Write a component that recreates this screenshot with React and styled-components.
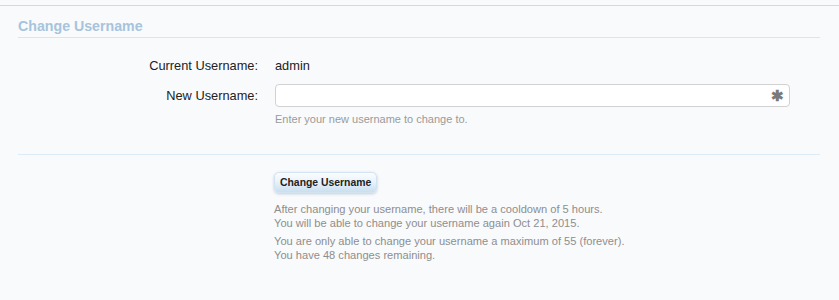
import React from "react";
import styled, { createGlobalStyle } from "styled-components";

const Global = createGlobalStyle`
  html, body { margin: 0; padding: 0; background: #f9fafc; }
  body { font-family: "Liberation Sans", Arial, sans-serif; }
`;

const Page = styled.div`
  margin-top: 5px;
  border-top: 1px solid #c9dcea;
  padding: 0 19px 40px 18px;
  background: #f9fafc;
`;

const Header = styled.h2`
  margin: 0;
  padding: 11px 0 1px;
  font-size: 14.2px;
  line-height: 19px;
  font-weight: bold;
  color: #a6c4dc;
  border-bottom: 1px solid #d6e6f2;
`;

const Form = styled.div`
  display: grid;
  grid-template-columns: 240px 1fr;
  column-gap: 17px;
  align-items: center;
  margin-top: 19px;
`;

const Label = styled.div`
  text-align: right;
  font-size: 12.8px;
  line-height: 18px;
  color: #222;
`;

const Value = styled.div`
  font-size: 12.8px;
  line-height: 18px;
  color: #222;
`;

const Spacer = styled.div`
  grid-column: 1 / -1;
  height: ${(p) => p.h}px;
`;

const InputWrap = styled.div`
  position: relative;
  width: 515px;
`;

const Input = styled.input`
  box-sizing: border-box;
  width: 100%;
  height: 23px;
  border: 1px solid #d2d2d2;
  border-radius: 4px;
  background: #fff;
  font-family: inherit;
  font-size: 12px;
  padding: 0 24px 0 6px;
  outline: none;
`;

const Req = styled.span`
  position: absolute;
  right: 6px;
  top: 4px;
  font-size: 15px;
  line-height: 15px;
  font-weight: bold;
  color: #7a7a7a;
`;

const Hint = styled.div`
  grid-column: 2;
  margin-top: 5px;
  font-size: 11px;
  line-height: 14px;
  color: #9a9a9a;
`;

const Divider = styled.div`
  margin-top: 28px;
  border-top: 1px solid #dcebf5;
`;

const Submit = styled.div`
  margin-left: 256px;
  padding-top: 17px;
`;

const Button = styled.button`
  box-sizing: border-box;
  height: 21px;
  padding: 0 5px;
  border: 1px solid #d3e3ef;
  border-radius: 5px;
  background: linear-gradient(to bottom, #fbfdff 0%, #eaf3fa 45%, #c9dfef 100%);
  box-shadow: 0 1px 3px rgba(120, 150, 180, 0.45);
  font-family: inherit;
  font-size: 10.4px;
  font-weight: bold;
  color: #222;
  cursor: pointer;
`;

const Note = styled.p`
  margin: ${(p) => p.mt}px 0 0;
  font-size: 11.1px;
  line-height: 13.5px;
  color: #8e8e8e;
`;

export default function App() {
  return (
    <>
      <Global />
      <Page>
        <Header>Change Username</Header>
        <Form>
          <Label>Current Username:</Label>
          <Value>admin</Value>
          <Spacer h={9} />
          <Label>New Username:</Label>
          <InputWrap>
            <Input type="text" />
            <Req>✱</Req>
          </InputWrap>
          <Hint>Enter your new username to change to.</Hint>
        </Form>
        <Divider />
        <Submit>
          <Button>Change Username</Button>
          <Note mt={10}>
            After changing your username, there will be a cooldown of 5 hours.
            <br />
            You will be able to change your username again Oct 21, 2015.
          </Note>
          <Note mt={5}>
            You are only able to change your username a maximum of 55 (forever).
            <br />
            You have 48 changes remaining.
          </Note>
        </Submit>
      </Page>
    </>
  );
}
